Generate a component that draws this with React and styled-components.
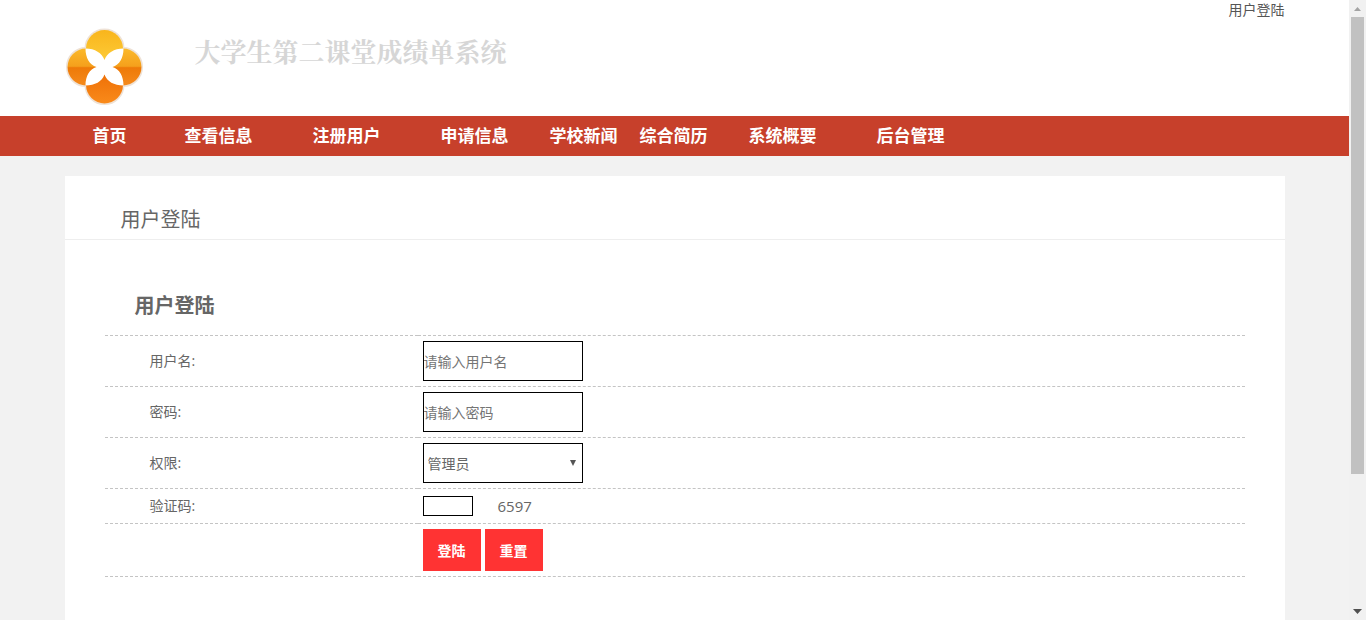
import { useState } from 'react';
import styled, { createGlobalStyle } from 'styled-components';

const GlobalStyle = createGlobalStyle`
  * {
    box-sizing: border-box;
  }
  body {
    margin: 0;
    color: #666;
    font-family: "Open Sans", "Noto Sans CJK SC", sans-serif;
    font-size: 14px;
    line-height: 20px;
  }
`

const Root = styled.div`
  display: flex;
  height: 100vh;
`

const Page = styled.div`
  flex: 1;
  overflow-y: auto;
  scrollbar-width: none;
  background: #f2f2f2;
`

const Container = styled.div`
  max-width: 1220px;
  margin: 0 auto;
`

const Header = styled.header`
  background: #fff;
`

const TopLinks = styled.div`
  display: flex;
  justify-content: flex-end;
  height: 20px;
`

const TopLink = styled.a`
  color: #555;
  text-decoration: none;
`

const Brand = styled.div`
  display: flex;
  align-items: flex-start;
  gap: 50px;
  height: 96px;
  padding-top: 7px;
`

const SiteTitle = styled.h1`
  margin: 6px 0 0;
  color: #d6d6d6;
  font-family: "Noto Serif CJK SC", "Noto Sans CJK SC", serif;
  font-size: 26px;
  font-weight: bold;
  line-height: 36px;
`

const Navbar = styled.nav`
  background: #c7402b;
`

const NavList = styled.ul`
  display: flex;
  margin: 0;
  padding: 0;
  list-style: none;
`

const NavItem = styled.li`
  width: ${props => props.$wide ? '128px' : '90px'};
  text-align: center;
`

const NavLink = styled.a`
  display: block;
  color: #fff;
  font-size: 17px;
  font-weight: bold;
  line-height: 40px;
  text-decoration: none;
`

const Card = styled.main`
  min-height: 620px;
  margin: 20px 0;
  background: #fff;
`

const CardTitle = styled.h2`
  margin: 0;
  padding: 29px 56px 4px;
  border-bottom: 1px solid #eee;
  font-size: 20px;
  font-weight: normal;
  line-height: 30px;
`

const Form = styled.form`
  padding: 51px 40px;
`

const FormTitle = styled.h3`
  margin: 0;
  padding: 0 30px 14px;
  font-size: 20px;
  font-weight: bold;
  line-height: 30px;
`

const FormTable = styled.table`
  width: 100%;
  border-collapse: collapse;
  table-layout: fixed;
`

const FormRow = styled.tr`
  border-top: 1px dashed #c4c4c4;
  border-bottom: 1px dashed #c4c4c4;
`

const LabelCell = styled.th`
  width: 313px;
  padding: 5px 5px 5px 45px;
  font-weight: normal;
  text-align: left;
`

const FieldCell = styled.td`
  padding: 5px;
`

const Field = styled.div`
  display: flex;
  align-items: center;
  gap: ${props => props.$gap || '0'};
  min-height: 24px;
`

const Input = styled.input`
  width: ${props => props.$small ? '50px' : '160px'};
  height: ${props => props.$small ? '20px' : '40px'};
  padding: 0;
  border: 1px solid #000;
  background: #fff;
  color: #666;
  font: inherit;

  &::placeholder {
    color: #757575;
  }
`

const SelectBox = styled.div`
  position: relative;
`

const Select = styled.select`
  display: block;
  width: 160px;
  height: 40px;
  padding: 2px 4px 0;
  border: 1px solid #000;
  border-radius: 0;
  appearance: none;
  background: #fff;
  color: #666;
  font: inherit;
`

const SelectArrow = styled.svg`
  position: absolute;
  top: 17px;
  right: 7px;
  pointer-events: none;
`

const Captcha = styled.span`
  font-size: 15px;
`

const Button = styled.button`
  width: 58px;
  height: 42px;
  padding: 2px 0 0;
  border: 0;
  background: #ff3333;
  color: #fff;
  font: inherit;
  font-weight: bold;
`

const ScrollRail = styled.div`
  display: flex;
  flex-direction: column;
  align-items: center;
  width: 17px;
  background: #f1f1f1;
`

const ScrollTrack = styled.div`
  flex: 1;
  width: 13px;
`

const ScrollThumb = styled.div`
  height: 78%;
  background: #c1c1c1;
`

const navItems = [
  { name: '首页' },
  { name: '查看信息', wide: true },
  { name: '注册用户', wide: true },
  { name: '申请信息', wide: true },
  { name: '学校新闻' },
  { name: '综合简历' },
  { name: '系统概要', wide: true },
  { name: '后台管理', wide: true },
]

function Logo() {
  return (
    <svg width="80" height="80" viewBox="0 0 80 80" aria-hidden="true">
      <defs>
        <linearGradient id="top" x1="0" y1="0" x2="0" y2="1">
          <stop offset="0" stopColor="#f9b51c" />
          <stop offset="1" stopColor="#fdcf3c" />
        </linearGradient>
        <linearGradient id="side" x1="0" y1="0" x2="0" y2="1">
          <stop offset="0" stopColor="#fbb92a" />
          <stop offset="0.48" stopColor="#f5a01c" />
          <stop offset="0.52" stopColor="#ee7a08" />
          <stop offset="1" stopColor="#f58a1c" />
        </linearGradient>
        <linearGradient id="bottom" x1="0" y1="0" x2="0" y2="1">
          <stop offset="0" stopColor="#ec6a02" />
          <stop offset="1" stopColor="#f98a1a" />
        </linearGradient>
      </defs>
      <g fill="#fff" stroke="#eee2d6" strokeWidth="2">
        <circle cx="39.5" cy="21.5" r="19" />
        <circle cx="21" cy="40" r="19" />
        <circle cx="58" cy="40" r="19" />
        <circle cx="39.5" cy="58" r="19" />
      </g>
      <circle cx="21" cy="40" r="18.5" fill="url(#side)" />
      <circle cx="58" cy="40" r="18.5" fill="url(#side)" />
      <circle cx="39.5" cy="21.5" r="18.5" fill="url(#top)" />
      <circle cx="39.5" cy="58" r="18.5" fill="url(#bottom)" />
      <path
        fill="#fff"
        d="M20.5 21.5 C30 21.500 37 26 39.5 33 C42 26 49 21.500 58.5 21.500
           C58.500 31 54.500 38 47.500 40 C54.500 42 58.500 49 58.500 58.500
           C49 58.500 42 54.500 39.500 47.500 C37 54.500 30 58.500 20.500 58.500
           C20.500 49 24.500 42 31.500 40 C24.500 38 20.500 31 20.500 21.500Z"
      />
    </svg>
  )
}

function LoginForm() {
  const [username, setUsername] = useState('')
  const [password, setPassword] = useState('')
  const [code, setCode] = useState('')

  const handleReset = () => {
    setUsername('')
    setPassword('')
    setCode('')
  }

  return (
    <Form onSubmit={e => e.preventDefault()} onReset={handleReset}>
      <FormTitle>用户登陆</FormTitle>
      <FormTable>
        <tbody>
          <FormRow>
            <LabelCell scope="row"><label htmlFor="username">用户名:</label></LabelCell>
            <FieldCell>
              <Field>
                <Input id="username" placeholder="请输入用户名" value={username} onChange={e => setUsername(e.target.value)} />
              </Field>
            </FieldCell>
          </FormRow>
          <FormRow>
            <LabelCell scope="row"><label htmlFor="password">密码:</label></LabelCell>
            <FieldCell>
              <Field>
                <Input id="password" type="password" placeholder="请输入密码" value={password} onChange={e => setPassword(e.target.value)} />
              </Field>
            </FieldCell>
          </FormRow>
          <FormRow>
            <LabelCell scope="row"><label htmlFor="role">权限:</label></LabelCell>
            <FieldCell>
              <Field>
                <SelectBox>
                  <Select id="role">
                    <option>管理员</option>
                  </Select>
                  <SelectArrow width="6" height="6" viewBox="0 0 6 6">
                    <path d="M0 0h6L3 6z" fill="#555" />
                  </SelectArrow>
                </SelectBox>
              </Field>
            </FieldCell>
          </FormRow>
          <FormRow>
            <LabelCell scope="row"><label htmlFor="code">验证码:</label></LabelCell>
            <FieldCell>
              <Field $gap="25px">
                <Input id="code" $small value={code} onChange={e => setCode(e.target.value)} />
                <Captcha>6597</Captcha>
              </Field>
            </FieldCell>
          </FormRow>
          <FormRow>
            <LabelCell as="td" />
            <FieldCell>
              <Field $gap="4px">
                <Button type="submit">登陆</Button>
                <Button type="reset">重置</Button>
              </Field>
            </FieldCell>
          </FormRow>
        </tbody>
      </FormTable>
    </Form>
  )
}

function App() {
  return (
    <Root>
      <GlobalStyle />
      <Page>
        <Header>
          <Container>
            <TopLinks>
              <TopLink href="#login">用户登陆</TopLink>
            </TopLinks>
            <Brand>
              <Logo />
              <SiteTitle>大学生第二课堂成绩单系统</SiteTitle>
            </Brand>
          </Container>
        </Header>
        <Navbar>
          <Container>
            <NavList>
              {navItems.map(item => (
                <NavItem key={item.name} $wide={item.wide}>
                  <NavLink href="#">{item.name}</NavLink>
                </NavItem>
              ))}
            </NavList>
          </Container>
        </Navbar>
        <Container>
          <Card id="login">
            <CardTitle>用户登陆</CardTitle>
            <LoginForm />
          </Card>
        </Container>
      </Page>
      <ScrollRail aria-hidden="true">
        <svg width="17" height="17" viewBox="0 0 17 17">
          <path d="M5 11h7L8.500 7z" fill="#a3a3a3" />
        </svg>
        <ScrollTrack>
          <ScrollThumb />
        </ScrollTrack>
        <svg width="17" height="17" viewBox="0 0 17 17">
          <path d="M4 6h9L8.500 11z" fill="#505050" />
        </svg>
      </ScrollRail>
    </Root>
  );
}

export default App;
